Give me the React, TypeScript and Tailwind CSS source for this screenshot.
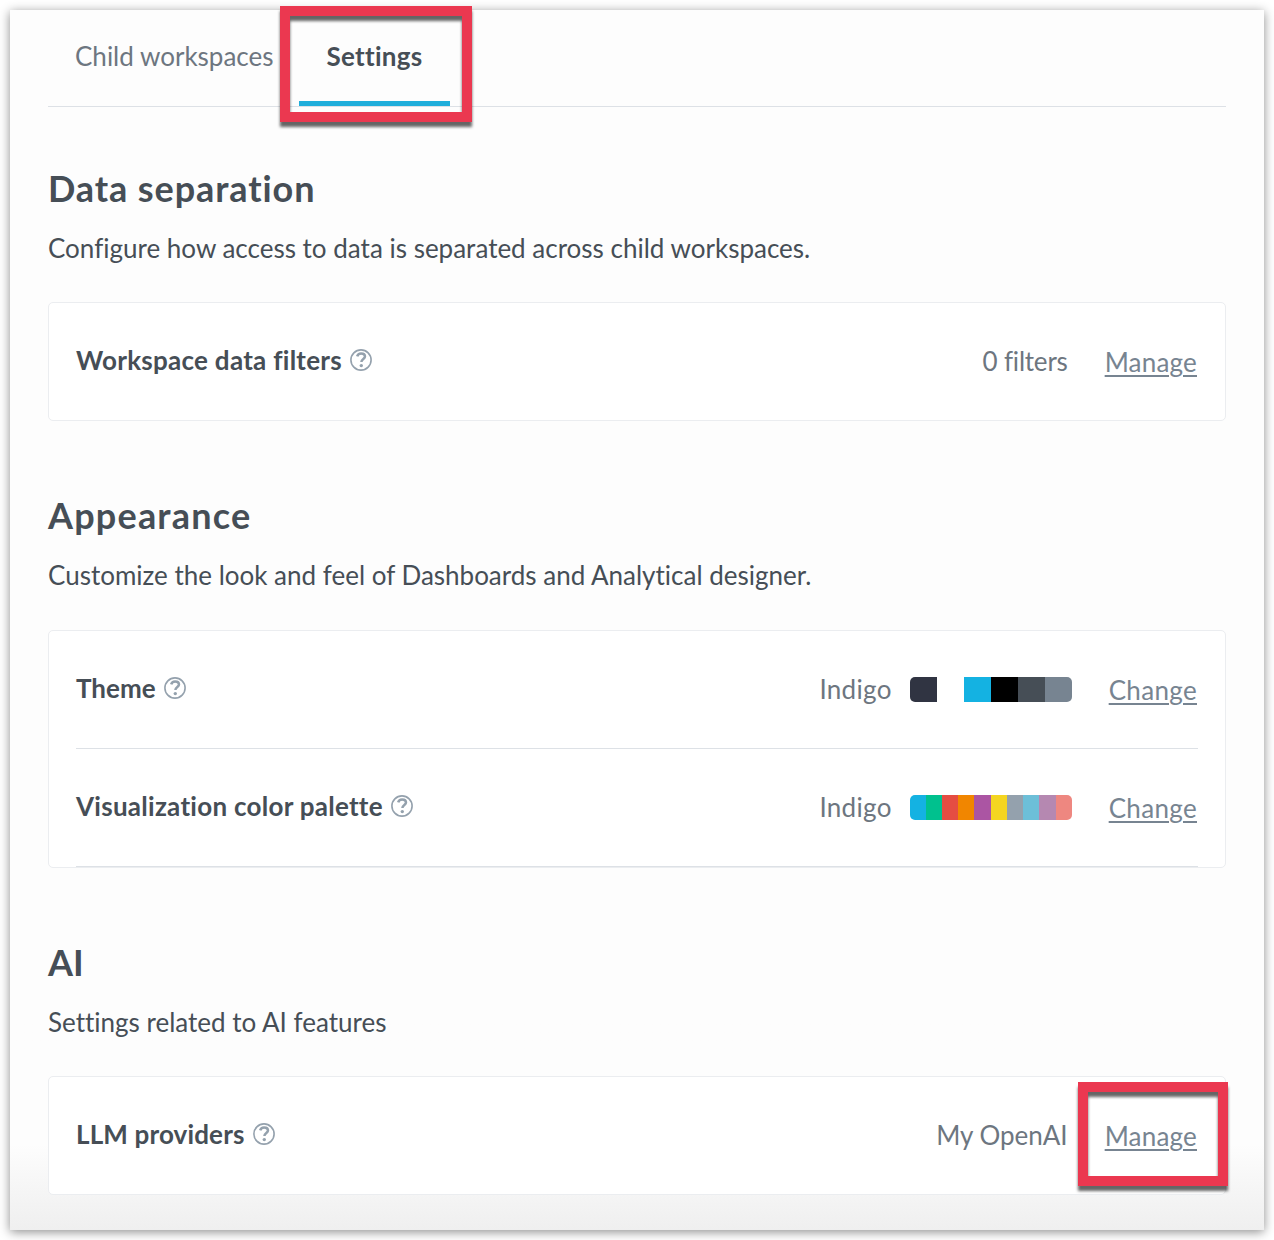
import React from 'react';
import clsx from 'clsx';

interface Row {
  label: string;
  labelClass: string;
  value: string;
  valueClass: string;
  action: string;
  actionClass: string;
  colors?: string[];
  highlighted?: boolean;
}

interface Section {
  title: string;
  titleClass: string;
  description: string;
  className: string;
  cardClass: string;
  rows: Row[];
}

const themeColors = ['#303442', '#ffffff', '#14b2e2', '#000000', '#464e56', '#778491'];

const paletteColors = [
  '#14b2e2',
  '#00c18e',
  '#e54d42',
  '#f18600',
  '#ab55a3',
  '#f4d521',
  '#94a1ad',
  '#6dbfd8',
  '#b588b1',
  '#ee8780',
];

const sections: Section[] = [
  {
    title: 'Data separation',
    titleClass: 'tracking-[0.9px]',
    description: 'Configure how access to data is separated across child workspaces.',
    className: 'pt-[61px]',
    cardClass: 'mt-[34px]',
    rows: [
      {
        label: 'Workspace data filters',
        labelClass: 'tracking-[0.27px]',
        value: '0 filters',
        valueClass: 'tracking-[-0.2px]',
        action: 'Manage',
        actionClass: 'tracking-[0.2px]',
      },
    ],
  },
  {
    title: 'Appearance',
    titleClass: 'tracking-[1.2px]',
    description: 'Customize the look and feel of Dashboards and Analytical designer.',
    className: 'pt-[74px]',
    cardClass: 'mt-[35px]',
    rows: [
      {
        label: 'Theme',
        labelClass: 'tracking-normal',
        value: 'Indigo',
        valueClass: 'tracking-[0.3px]',
        action: 'Change',
        actionClass: 'tracking-[0.33px]',
        colors: themeColors,
      },
      {
        label: 'Visualization color palette',
        labelClass: 'tracking-[0.27px]',
        value: 'Indigo',
        valueClass: 'tracking-[0.3px]',
        action: 'Change',
        actionClass: 'tracking-[0.33px]',
        colors: paletteColors,
      },
    ],
  },
  {
    title: 'AI',
    titleClass: 'tracking-normal',
    description: 'Settings related to AI features',
    className: 'pt-[74px]',
    cardClass: 'mt-[34px]',
    rows: [
      {
        label: 'LLM providers',
        labelClass: 'tracking-[0.15px]',
        value: 'My OpenAI',
        valueClass: 'tracking-normal',
        action: 'Manage',
        actionClass: 'tracking-[0.2px]',
        highlighted: true,
      },
    ],
  },
];

// Red frame drawn over the element it points at
const Highlight: React.FC<{ className: string }> = ({ className }) => (
  <span
    className={clsx(
      'pointer-events-none absolute z-10 border-[10px] border-[#eb3850] drop-shadow-[0_5px_1.5px_rgba(0,0,0,0.6)]',
      className
    )}
  />
);

const HelpIcon: React.FC = () => (
  <svg viewBox="0 0 22 22" className="ml-2 h-[22px] w-[22px] shrink-0" fill="none" stroke="#94a1ad">
    <circle cx="11" cy="11" r="10.1" strokeWidth="1.6" />
    <path d="M7.2 7.4c.5-2 2-2.900 3.900-2.900 2.200 0 3.900 1.100 3.900 3.100 0 2.400-3.600 2.500-3.600 5.400" strokeWidth="2.500" />
    <circle cx="11.300" cy="16.600" r="1.700" fill="#94a1ad" stroke="none" />
  </svg>
);

const Swatches: React.FC<{ colors: string[] }> = ({ colors }) => (
  <div className="ml-[18px] flex h-[25px] w-[162px] overflow-hidden rounded-[5px]">
    {colors.map((color) => (
      <span key={color} className="flex-1" style={{ backgroundColor: color }} />
    ))}
  </div>
);

const SettingsRow: React.FC<{ row: Row; divided: boolean }> = ({ row, divided }) => (
  <div className={clsx('flex items-center', divided ? 'h-[118px] border-b border-[#dde1e6]' : 'h-[117px]')}>
    <div className="flex items-center pb-1">
      <span className={clsx('font-bold text-[#464e56]', row.labelClass)}>{row.label}</span>
      <HelpIcon />
    </div>
    <div className="ml-auto flex items-center text-[#6d7680]">
      <span className={clsx('pb-0.5', row.valueClass)}>{row.value}</span>
      {row.colors && <Swatches colors={row.colors} />}
    </div>
    <div className="relative mr-px ml-[37px] flex">
      <a
        href="#"
        className={clsx('text-[#778491] underline decoration-2 underline-offset-[3px]', row.actionClass)}
      >
        {row.action}
      </a>
      {row.highlighted && <Highlight className="-top-[37.5px] -right-[31px] h-[104px] w-[150px]" />}
    </div>
  </div>
);

const App: React.FC = () => {
  return (
    <div className="h-[1240px] w-[1274px] overflow-hidden bg-white p-[10px] font-['Lato',sans-serif] text-[26px] leading-8 text-[#464e56] [font-variant-ligatures:none]">
      <main className="h-[1220px] bg-[#fdfdfd] bg-linear-to-b from-[#fdfdfd] from-93% to-[#efefef] px-[38px] shadow-[0_2px_10px_rgba(0,0,0,0.45)]">
        <nav className="flex h-[97px] border-b border-[#dde1e6]">
          <a href="#" className="ml-[27px] w-[197px] whitespace-nowrap pt-[30px] text-[#6d7680]">
            Child workspaces
          </a>
          <a
            href="#"
            className="relative ml-[27px] h-24 w-[151px] border-b-[5px] border-[#20aedb] pt-[30px] text-center font-bold tracking-[0.3px]"
          >
            Settings
            <Highlight className="-left-[19px] -top-1 h-[116px] w-48" />
          </a>
        </nav>

        {sections.map((section) => (
          <section key={section.title} className={section.className}>
            <h2 className={clsx('text-4xl leading-10 font-bold', section.titleClass)}>{section.title}</h2>
            <p className="mt-5 leading-10 whitespace-nowrap">{section.description}</p>
            <div className={clsx('rounded-[5px] border border-[#ebedf0] bg-white px-[27px]', section.cardClass)}>
              {section.rows.map((row) => (
                <SettingsRow key={row.label} row={row} divided={section.rows.length > 1} />
              ))}
            </div>
          </section>
        ))}
      </main>
    </div>
  );
};

export default App;
